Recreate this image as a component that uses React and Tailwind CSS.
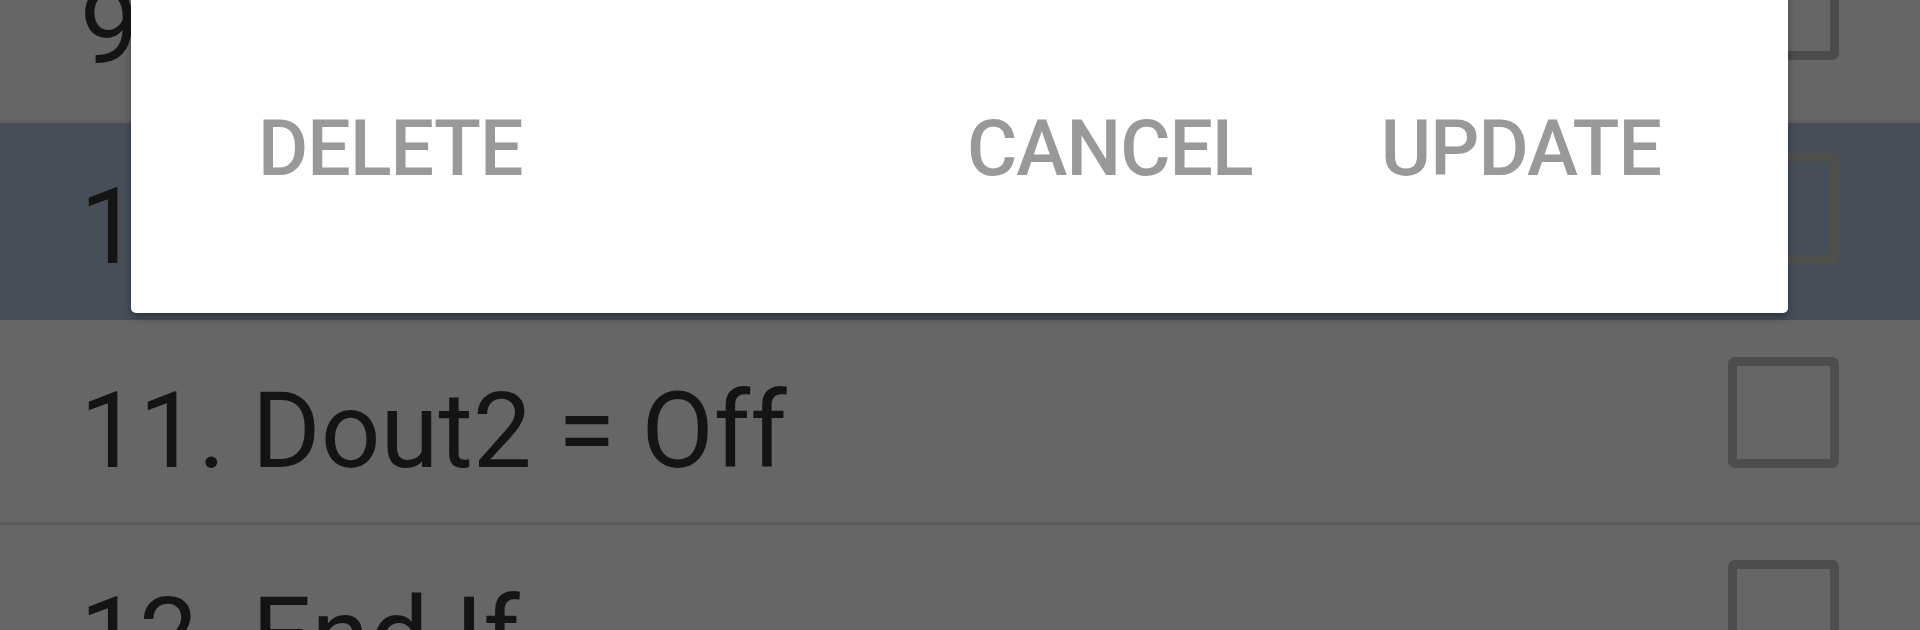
import React from "react";

function Checkbox({ className = "" }) {
  return (
    <div
      className={`w-[111px] h-[111px] shrink-0 rounded-[7px] border-[9px] ${className}`}
    />
  );
}

function Row({ label, rowClass, textMt, boxMt, boxClass }) {
  return (
    <div className={`flex items-start justify-between pl-[80px] pr-[81px] ${rowClass}`}>
      <span
        className={`text-[105px] leading-none text-[#141414] whitespace-nowrap ${textMt}`}
      >
        {label}
      </span>
      <Checkbox className={`${boxMt} ${boxClass}`} />
    </div>
  );
}

export default function App() {
  return (
    <div
      className="relative w-[1920px] h-[630px] overflow-hidden bg-[#666666]"
      style={{ fontFamily: "Roboto, 'Noto Sans', sans-serif" }}
    >
      <div className="flex flex-col mt-[-82px]">
        <Row
          label="9. Dout1 = On"
          rowClass="h-[205px] border-b-[3px] border-[#626262] bg-[#666666]"
          textMt="mt-[57px]"
          boxMt="mt-[31px]"
          boxClass="border-[#4c4c4c]"
        />
        <Row
          label="10. Delay 1s"
          rowClass="h-[197px] bg-[#474e58]"
          textMt="mt-[52px]"
          boxMt="mt-[30px]"
          boxClass="border-[#4f4f4c]"
        />
        <Row
          label="11. Dout2 = Off"
          rowClass="h-[205px] border-b-[3px] border-[#5a5a5a] bg-[#666666]"
          textMt="mt-[59px]"
          boxMt="mt-[37px]"
          boxClass="border-[#4d4d4d]"
        />
        <Row
          label="12. End If"
          rowClass="h-[205px] bg-[#666666]"
          textMt="mt-[59px]"
          boxMt="mt-[35px]"
          boxClass="border-[#4d4d4d]"
        />
      </div>

      <div className="absolute left-[131px] top-[-200px] w-[1657px] h-[513px] bg-white rounded-[5px] shadow-[0_4px_8px_rgba(0,0,0,0.35)] flex flex-col justify-end">
        <div className="flex items-center pl-[127px] pr-[127px] pb-[125px] text-[77px] leading-none font-medium text-[#999999] tracking-[-0.012em]">
          <span>DELETE</span>
          <div className="flex-1" />
          <span>CANCEL</span>
          <span className="ml-[128px]">UPDATE</span>
        </div>
      </div>
    </div>
  );
}
